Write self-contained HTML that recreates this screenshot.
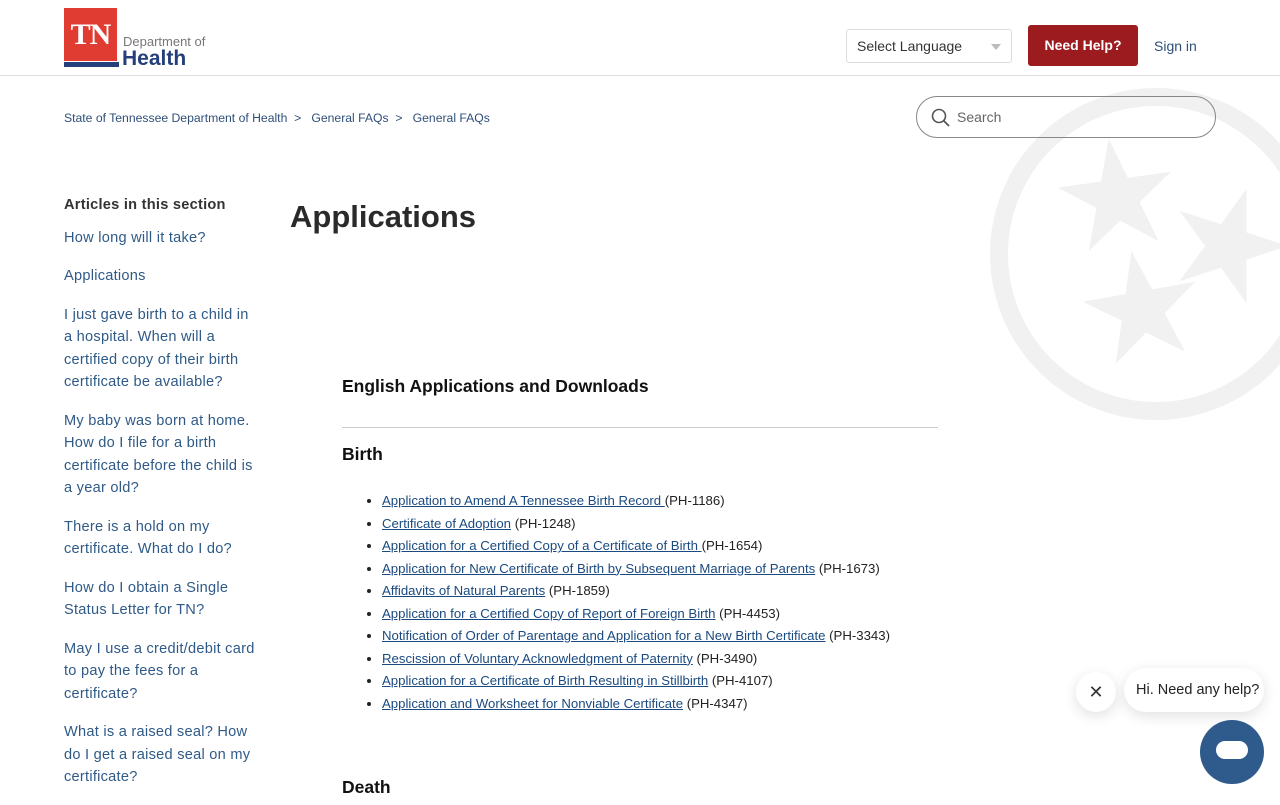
<!DOCTYPE html>
<html><head><meta charset="utf-8"><style>
*{box-sizing:border-box;margin:0;padding:0}
body{width:1280px;height:800px;overflow:hidden;background:#fff;font-family:"Liberation Sans",sans-serif;color:#222;position:relative}
.hdr{height:76px;border-bottom:1px solid #ddd;position:relative}
.logo{position:absolute;left:64px;top:8px;width:53px;height:53px;background:#e03c31;color:#fff;font-family:"Liberation Serif",serif;font-weight:bold;font-size:30px;text-align:center;line-height:53px;letter-spacing:-1px}
.logobar{position:absolute;left:64px;top:62px;width:55px;height:5px;background:#253f7a}
.dept{position:absolute;left:123px;top:34px;font-size:13px;color:#777}
.health{position:absolute;left:122px;top:47px;font-size:21px;font-weight:bold;color:#253f7a}
.sel{position:absolute;left:846px;top:29px;width:166px;height:34px;border:1px solid #ddd;border-radius:3px;font-size:14px;color:#333;padding:8px 10px}
.sel:after{content:"";position:absolute;right:10px;top:14px;border:5px solid transparent;border-top:6px solid #bbb}
.help{position:absolute;left:1028px;top:25px;width:110px;height:41px;background:#9b1b1f;color:#fff;border-radius:3px;font-weight:bold;font-size:14px;text-align:center;line-height:41px}
.sign{position:absolute;left:1154px;top:38px;font-size:14px;color:#2f4f7a}
.crumb{position:absolute;left:64px;top:111px;font-size:12.2px;color:#2f4f7a}
.search{position:absolute;left:916px;top:96px;width:300px;height:42px;border:1px solid #888;border-radius:21px;font-size:14px;color:#666;padding:12px 0 0 40px}
.side{position:absolute;left:64px;top:194px;width:192px;font-size:14.6px;letter-spacing:0.25px;line-height:22.5px;color:#2f5a87}
.side h4{color:#333;font-size:14.6px;margin-bottom:10px}
.side p{margin-bottom:16px}
h1{position:absolute;left:290px;top:199px;font-size:31px;color:#2a2a2a}
.c{position:absolute;left:342px;width:596px}
h3{font-size:17.5px;color:#111}
ul{list-style:disc;padding-left:40px;font-size:13.2px;line-height:22.5px;color:#222}
a{color:#1a4a80;text-decoration:underline}
.chat{position:absolute;left:1124px;top:668px;width:140px;height:44px;background:#fff;border-radius:22px;box-shadow:0 4px 14px rgba(0,0,0,.12);font-size:14.5px;line-height:44px;padding-left:12px;color:#222}
.x{position:absolute;left:1076px;top:672px;width:40px;height:40px;background:#fff;border-radius:50%;box-shadow:0 4px 14px rgba(0,0,0,.12);text-align:center;line-height:40px;font-size:18px;color:#333}
.bub{position:absolute;left:1200px;top:720px;width:64px;height:64px;background:#2f5a8c;border-radius:50%}
.bub i{position:absolute;left:16px;top:21px;width:32px;height:18px;background:#fff;border-radius:9px}
</style></head><body>
<svg style="position:absolute;left:0;top:0" width="1280" height="800">
<circle cx="1156" cy="254" r="157" fill="none" stroke="#f1f1f1" stroke-width="18"/>
<g fill="#f1f1f1">
<polygon transform="translate(1117,198) scale(60) rotate(-8)" points="0,-1 0.225,-0.309 0.951,-0.309 0.363,0.118 0.588,0.809 0,0.382 -0.588,0.809 -0.363,0.118 -0.951,-0.309 -0.225,-0.309"/>
<polygon transform="translate(1228,246) scale(60) rotate(18)" points="0,-1 0.225,-0.309 0.951,-0.309 0.363,0.118 0.588,0.809 0,0.382 -0.588,0.809 -0.363,0.118 -0.951,-0.309 -0.225,-0.309"/>
<polygon transform="translate(1142,310) scale(60) rotate(-10)" points="0,-1 0.225,-0.309 0.951,-0.309 0.363,0.118 0.588,0.809 0,0.382 -0.588,0.809 -0.363,0.118 -0.951,-0.309 -0.225,-0.309"/>
</g></svg>
<div class="hdr">
<div class="logo">TN</div><div class="logobar"></div>
<div class="dept">Department of</div><div class="health">Health</div>
<div class="sel">Select Language</div>
<div class="help">Need Help?</div>
<div class="sign">Sign in</div>
</div>
<div class="crumb">State of Tennessee Department of Health &nbsp;&gt;&nbsp;&nbsp; General FAQs &nbsp;&gt;&nbsp;&nbsp; General FAQs</div>
<div class="search"><svg style="position:absolute;left:14px;top:11px" width="20" height="20"><circle cx="8" cy="8" r="6.5" fill="none" stroke="#555" stroke-width="1.6"/><line x1="12.6" y1="12.6" x2="18" y2="18" stroke="#555" stroke-width="1.8"/></svg>Search</div>
<div class="side"><h4>Articles in this section</h4>
<p>How long will it take?</p><p>Applications</p>
<p>I just gave birth to a child in a hospital. When will a certified copy of their birth certificate be available?</p>
<p>My baby was born at home. How do I file for a birth certificate before the child is a year old?</p>
<p>There is a hold on my certificate. What do I do?</p>
<p>How do I obtain a Single Status Letter for TN?</p>
<p>May I use a credit/debit card to pay the fees for a certificate?</p>
<p>What is a raised seal? How do I get a raised seal on my certificate?</p></div>
<h1>Applications</h1>
<div class="c" style="top:376px"><h3>English Applications and Downloads</h3></div>
<div class="c" style="top:427px;border-top:1px solid #ccc"></div>
<div class="c" style="top:444px"><h3>Birth</h3></div>
<div class="c" style="top:490px"><ul>
<li><a>Application to Amend A Tennessee Birth Record </a> (PH-1186)</li>
<li><a>Certificate of Adoption</a> (PH-1248)</li>
<li><a>Application for a Certified Copy of a Certificate of Birth </a> (PH-1654)</li>
<li><a>Application for New Certificate of Birth by Subsequent Marriage of Parents</a> (PH-1673)</li>
<li><a>Affidavits of Natural Parents</a> (PH-1859)</li>
<li><a>Application for a Certified Copy of Report of Foreign Birth</a> (PH-4453)</li>
<li><a>Notification of Order of Parentage and Application for a New Birth Certificate</a> (PH-3343)</li>
<li><a>Rescission of Voluntary Acknowledgment of Paternity</a> (PH-3490)</li>
<li><a>Application for a Certificate of Birth Resulting in Stillbirth</a> (PH-4107)</li>
<li><a>Application and Worksheet for Nonviable Certificate</a> (PH-4347)</li>
</ul></div>
<div class="c" style="top:777px"><h3>Death</h3></div>
<div class="x">✕</div>
<div class="chat">Hi. Need any help?</div>
<div class="bub"><i></i></div>
</body></html>
